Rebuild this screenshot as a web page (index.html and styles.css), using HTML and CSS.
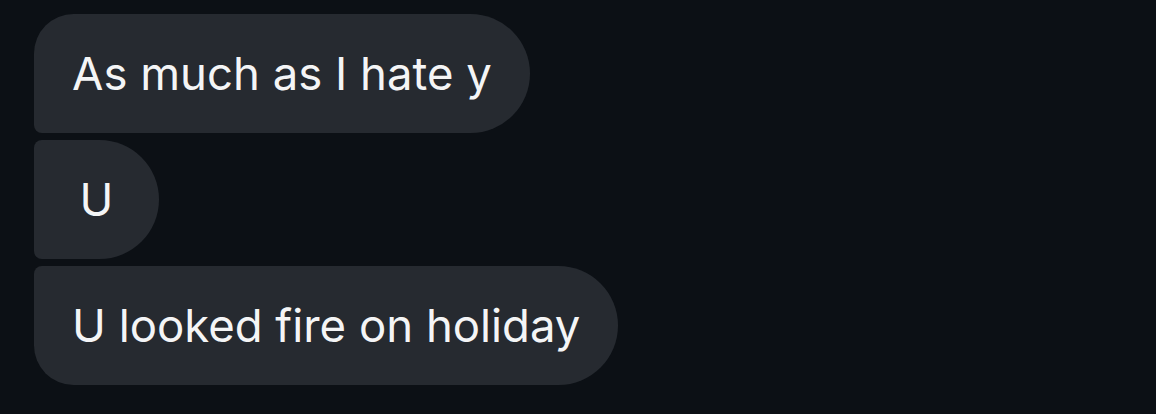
FILE: index.html
```html
<!DOCTYPE html>
<html>
<head>
<meta charset="utf-8">
<link rel="stylesheet" href="styles.css">
</head>
<body>
<div class="thread">
  <div class="bubble first">As much as I hate y</div>
  <div class="bubble middle center">U</div>
  <div class="bubble last">U looked fire on holiday</div>
</div>
</body>
</html>
```
FILE: styles.css
```css
html, body {
  margin: 0;
  padding: 0;
  background: #0c1015;
  height: 100%;
}
.thread {
  display: flex;
  flex-direction: column;
  align-items: flex-start;
  gap: 7px;
  padding: 14px 0 0 34px;
}
.bubble {
  box-sizing: border-box;
  height: 119px;
  display: flex;
  align-items: center;
  padding: 0 38px 0 38px;
  background: #262a30;
  color: #f4f5f6;
  font-family: Inter, "Noto Sans", sans-serif;
  font-size: 45.5px;
  font-weight: 380;
  border-radius: 8px 60px 60px 8px;
  white-space: nowrap;
}
.bubble.first {
  border-top-left-radius: 40px;
}
.bubble.last {
  border-bottom-left-radius: 40px;
}
.bubble.center {
  width: 125px;
  justify-content: center;
  padding: 0;
}
```
